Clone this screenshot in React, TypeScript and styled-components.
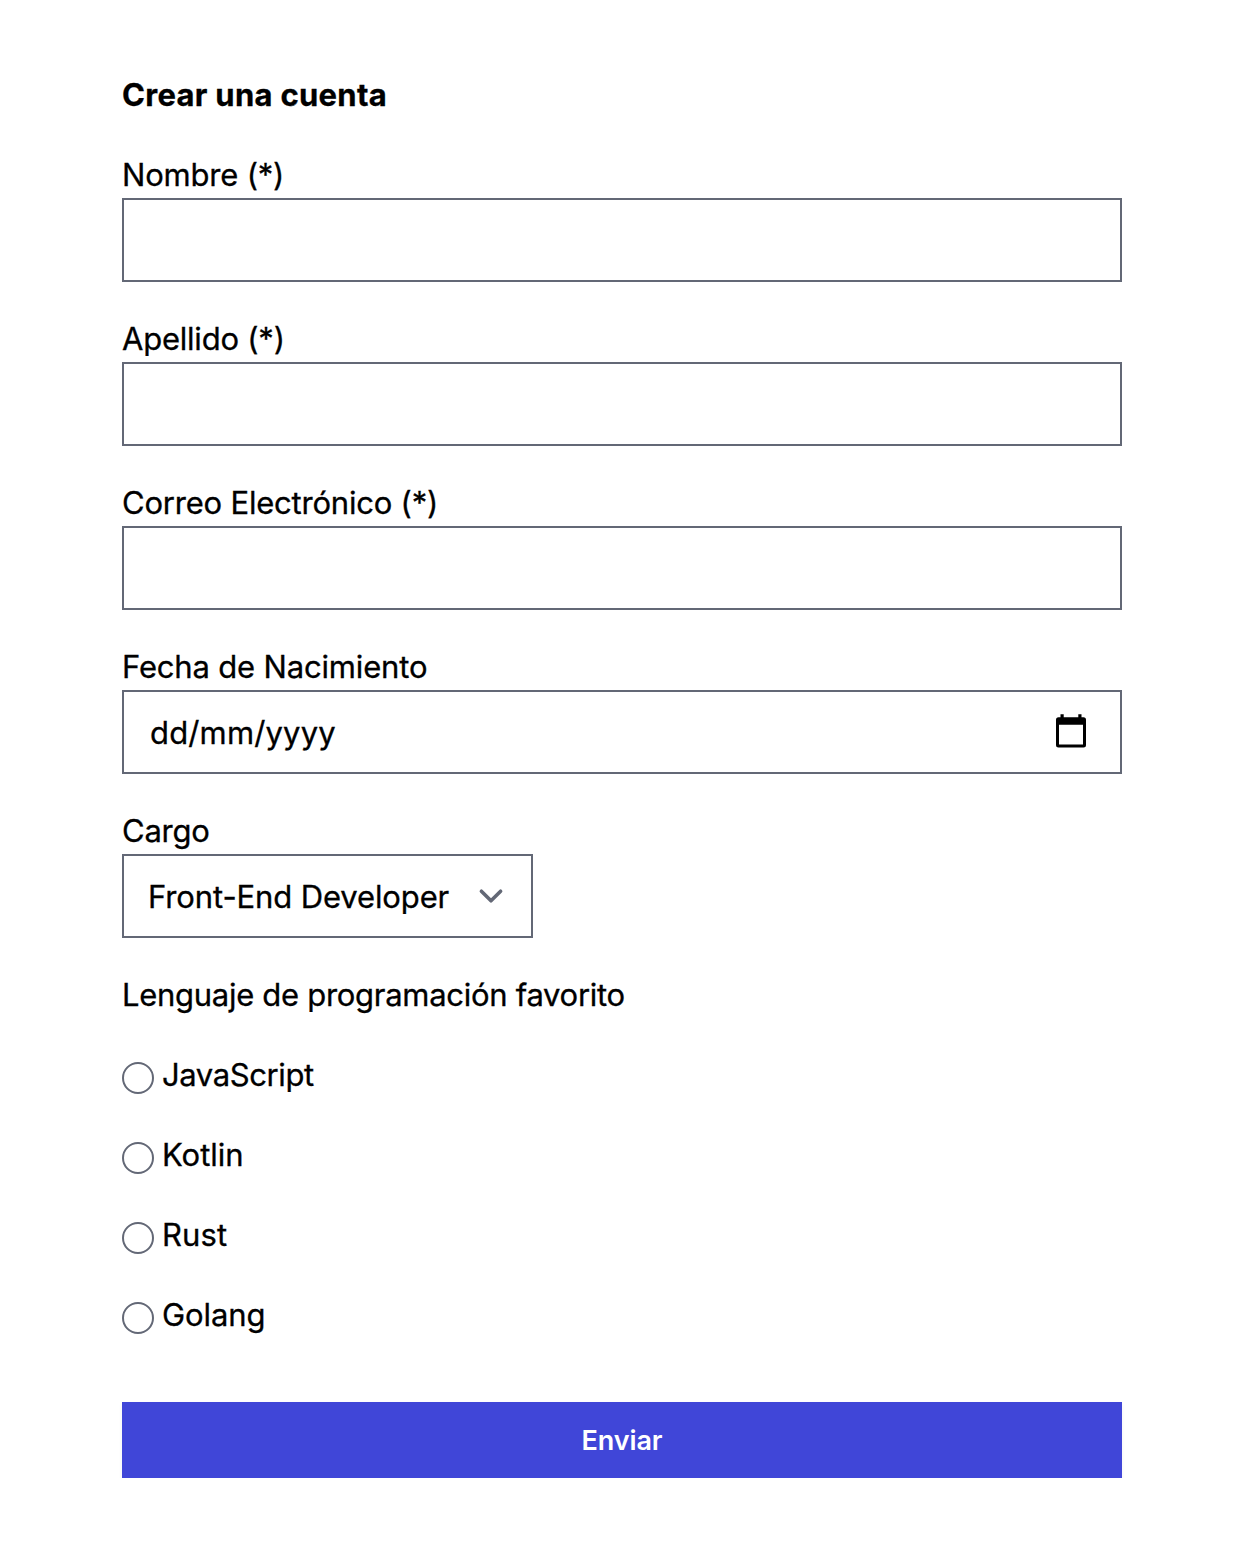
import React from "react";
import styled, { createGlobalStyle } from "styled-components";

const GlobalStyle = createGlobalStyle`
  *, *::before, *::after { box-sizing: border-box; }
  body {
    margin: 0;
    background: #fff;
    color: #000;
    font-family: Inter, "Liberation Sans", sans-serif;
    font-size: 31px;
    line-height: 48px;
    -webkit-text-stroke: 0.3px currentColor;
  }
`;

const line = "#636876";

const Form = styled.form`
  display: flex;
  flex-direction: column;
  align-items: stretch;
  gap: 32px;
  width: 1000px;
  margin: 71px 0 0 122px;
`;

const Title = styled.h1`
  margin: 0;
  height: 47px;
  font-size: 31px;
  line-height: 48px;
  font-weight: 700;
  letter-spacing: 0.3px;
`;

const Field = styled.div`
  display: flex;
  flex-direction: column;
  align-items: flex-start;
`;

const Label = styled.label<{ $track?: number }>`
  height: 48px;
  line-height: 50px;
  white-space: nowrap;
  letter-spacing: ${(p) => p.$track ?? 0}px;
`;

const TextInput = styled.input`
  width: 100%;
  height: 84px;
  padding: 16px 24px;
  border: 2px solid ${line};
  border-radius: 0;
  background: #fff;
  font: inherit;
  outline: none;
`;

const DateBox = styled.div`
  display: flex;
  align-items: center;
  justify-content: space-between;
  width: 100%;
  height: 84px;
  padding: 2px 34px 0 26px;
  border: 2px solid ${line};
  letter-spacing: 0.15px;

  svg { display: block; margin-bottom: 4px; }
`;

const SelectBox = styled.div`
  display: flex;
  align-items: center;
  justify-content: space-between;
  width: 411px;
  height: 84px;
  padding: 0 16px 0 24px;
  border: 2px solid ${line};
  white-space: nowrap;

  svg { display: block; flex: none; }
`;

const SelectValue = styled.span`
  padding-top: 2px;
  letter-spacing: -0.12px;
`;

const Option = styled.div`
  display: flex;
  align-items: flex-start;
  gap: 8px;
  height: 48px;
`;

const Radio = styled.input`
  appearance: none;
  flex: none;
  width: 32px;
  height: 32px;
  margin: 12px 0 0;
  border: 2px solid ${line};
  border-radius: 50%;
  background: #fff;
`;

const Submit = styled.button`
  height: 76px;
  margin-top: 32px;
  padding: 1px 0 0;
  border: 0;
  background: #4046d8;
  box-shadow: 0 2px 4px rgba(0, 0, 0, 0.05);
  color: #fff;
  font: 600 27px/40px Inter, "Liberation Sans", sans-serif;
  letter-spacing: -0.1px;
  -webkit-text-stroke: 0;
`;

const CalendarIcon = () => (
  <svg width="30" height="34" viewBox="0 0 30 34">
    <path
      fillRule="evenodd"
      d="M4.5 0.300h3.200v3h14.600v-3h3.200v3h2a2.500 2.500 0 0 1 2.500 2.500v25.300a2.500 2.500 0 0 1-2.500 2.500h-25A2.500 2.500 0 0 1 0 31.100V5.800a2.500 2.500 0 0 1 2.500-2.500h2zM3 10.700v19.700h24V10.700z"
    />
  </svg>
);

const ChevronIcon = () => (
  <svg width="48" height="48" viewBox="0 0 20 20" fill="none">
    <path d="M6 8l4 4 4-4" stroke={line} strokeWidth="1.5" strokeLinecap="round" strokeLinejoin="round" />
  </svg>
);

const textFields = [
  { id: "nombre", text: "Nombre (*)", track: -0.2 },
  { id: "apellido", text: "Apellido (*)", track: -0.22 },
  { id: "correo", text: "Correo Electrónico (*)", track: -0.21 },
];

const languages = [
  { text: "JavaScript", track: -0.4 },
  { text: "Kotlin", track: 0 },
  { text: "Rust", track: 0.1 },
  { text: "Golang", track: -0.1 },
];

export default function App() {
  return (
    <>
      <GlobalStyle />
      <Form onSubmit={(e) => e.preventDefault()}>
        <Title>Crear una cuenta</Title>
        {textFields.map((f) => (
          <Field key={f.id}>
            <Label htmlFor={f.id} $track={f.track}>{f.text}</Label>
            <TextInput id={f.id} />
          </Field>
        ))}
        <Field>
          <Label $track={-0.17}>Fecha de Nacimiento</Label>
          <DateBox>
            <span>dd/mm/yyyy</span>
            <CalendarIcon />
          </DateBox>
        </Field>
        <Field>
          <Label $track={-0.25}>Cargo</Label>
          <SelectBox>
            <SelectValue>Front-End Developer</SelectValue>
            <ChevronIcon />
          </SelectBox>
        </Field>
        <Label as="div" $track={-0.29}>Lenguaje de programación favorito</Label>
        {languages.map((l) => (
          <Option key={l.text}>
            <Radio type="radio" name="lenguaje" id={l.text} />
            <Label htmlFor={l.text} $track={l.track}>{l.text}</Label>
          </Option>
        ))}
        <Submit>Enviar</Submit>
      </Form>
    </>
  );
}
